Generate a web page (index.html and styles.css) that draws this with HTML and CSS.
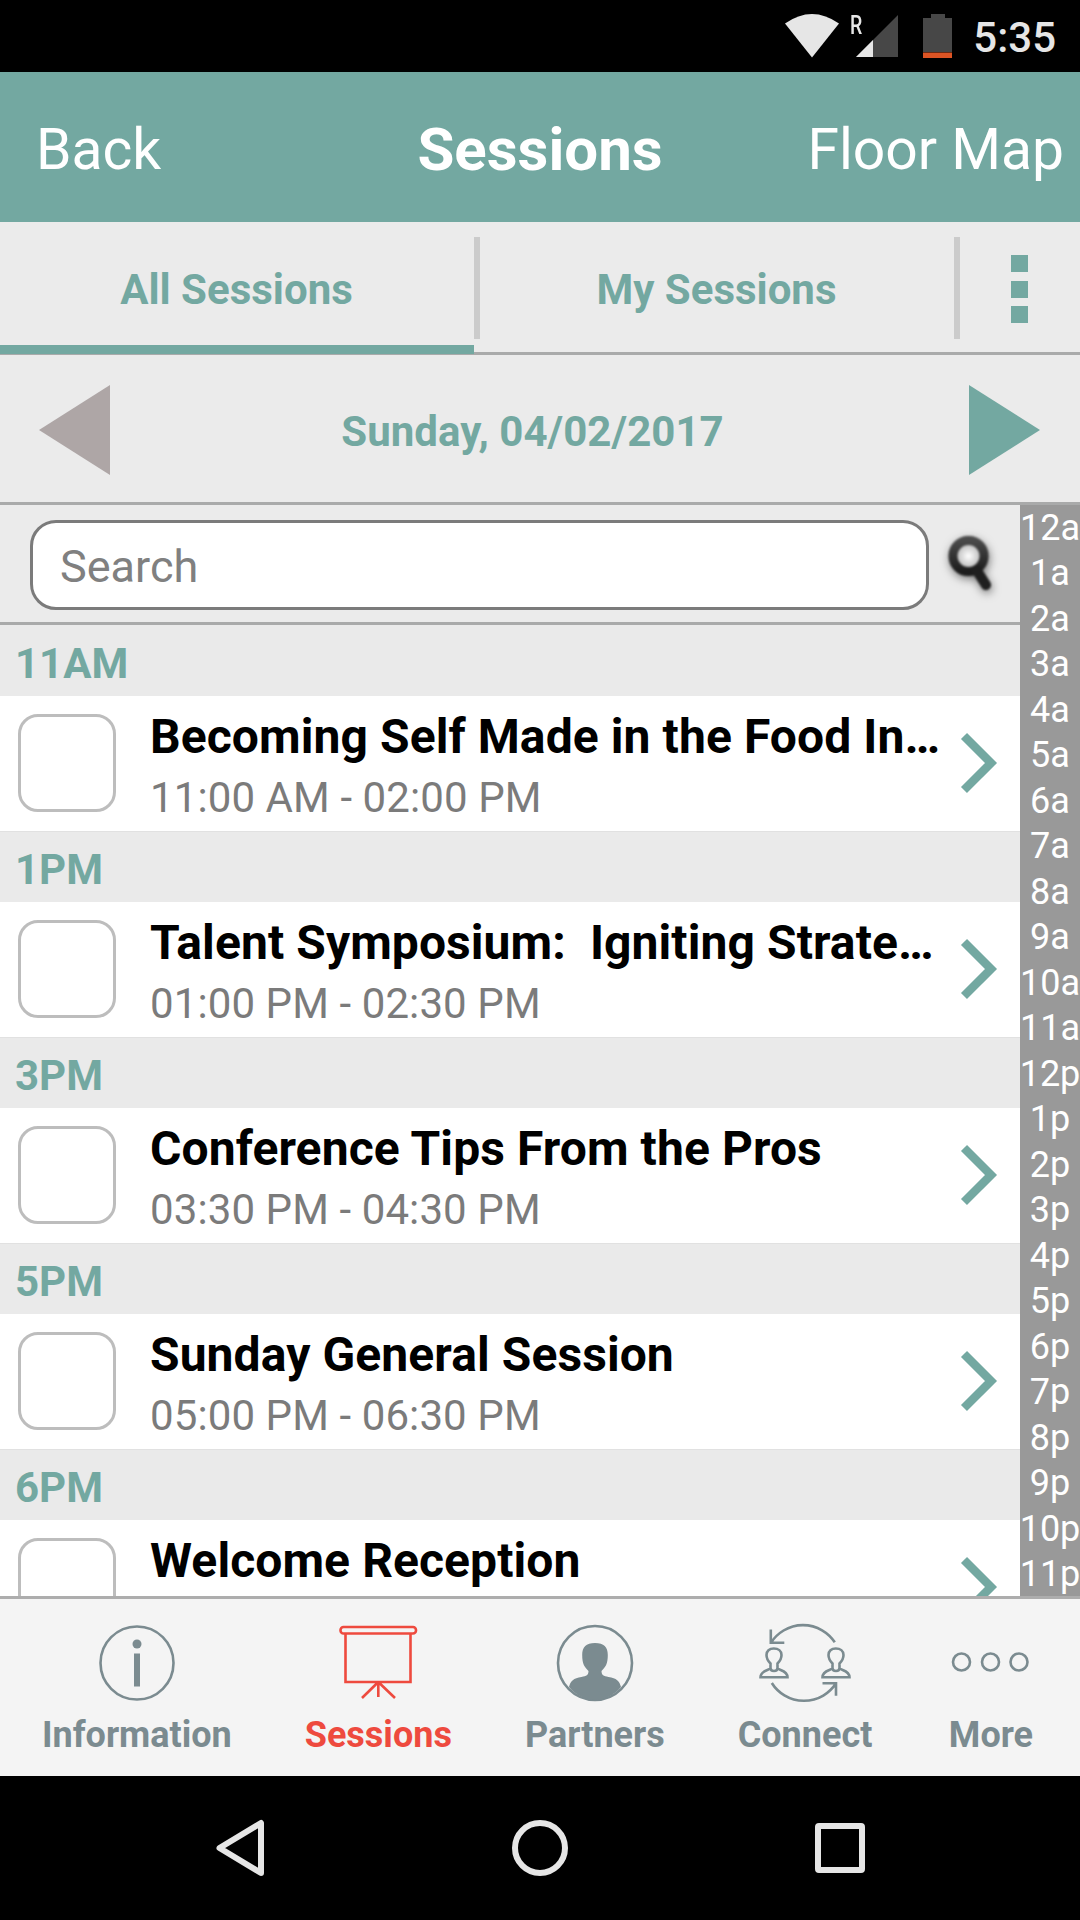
FILE: index.html
```html
<!DOCTYPE html>
<html lang="en">
<head>
  <meta charset="UTF-8">
  <meta name="viewport" content="width=device-width, initial-scale=1.0">
  <title>Sessions</title>
  <link rel="stylesheet" href="styles.css">
</head>
<body>
  <div class="status-bar">
    <svg class="wifi" width="54" height="44" viewBox="0 0 54 44"><path d="M0 9.500Q27-9.500 54 9.500L27 43.500z" fill="#e6e6e6"/></svg>
    <span class="roaming">R</span>
    <svg class="signal" width="44" height="44" viewBox="0 0 44 44">
      <path d="M43 1v42H1z" fill="#474747"/>
      <path d="M18 26v17H1z" fill="#e6e6e6"/>
    </svg>
    <svg class="battery" width="30" height="44" viewBox="0 0 30 44">
      <path d="M8 0h14v4h7v34H0V4h8z" fill="#474747"/>
      <path d="M0 38.500h29v5.500H0z" fill="#dc5424"/>
    </svg>
    <span class="clock">5:35</span>
  </div>

  <header class="header">
    <a class="header-link">Back</a>
    <h1>Sessions</h1>
    <a class="header-link right">Floor Map</a>
  </header>

  <nav class="tabs">
    <div class="tab active">All Sessions</div>
    <div class="divider"></div>
    <div class="tab">My Sessions</div>
    <div class="divider"></div>
    <div class="menu"><i></i><i></i><i></i></div>
  </nav>

  <div class="date-bar">
    <svg width="71" height="90" viewBox="0 0 71 90"><path d="M71 0v90L0 45z" fill="#aea6a6"/></svg>
    <span class="date">Sunday, 04/02/2017</span>
    <svg width="71" height="90" viewBox="0 0 71 90"><path d="M0 0v90l71-45z" fill="#73a8a1"/></svg>
  </div>

  <main class="content">
    <div class="list">
      <div class="search">
        <input class="search-input" type="text" placeholder="Search">
        <svg class="search-icon" width="60" height="66" viewBox="0 0 60 66">
          <defs>
            <radialGradient id="glass"><stop offset="0" stop-color="#fff"/><stop offset="1" stop-color="#aaa"/></radialGradient>
            <linearGradient id="ring" x1="0" y1="0" x2="0" y2="1"><stop offset="0" stop-color="#4a4a4a"/><stop offset="1" stop-color="#1c1c1c"/></linearGradient>
          </defs>
          <circle cx="27.500" cy="28" r="15.500" fill="url(#glass)" stroke="url(#ring)" stroke-width="9"/>
          <path d="M35.500 42l9.500 15" stroke="#1f1f1f" stroke-width="10" stroke-linecap="round"/>
        </svg>
      </div>

      <h2 class="hour">11AM</h2>
      <div class="session">
        <span class="checkbox"></span>
        <div class="info">
          <div class="title">Becoming Self Made in the Food In…</div>
          <div class="time">11:00 AM - 02:00 PM</div>
        </div>
        <svg class="chevron" width="38" height="62" viewBox="0 0 38 62"><path d="M4 4l27 27L4 58" fill="none" stroke="#73a8a1" stroke-width="8.500"/></svg>
      </div>

      <h2 class="hour">1PM</h2>
      <div class="session">
        <span class="checkbox"></span>
        <div class="info">
          <div class="title">Talent Symposium:  Igniting Strate…</div>
          <div class="time">01:00 PM - 02:30 PM</div>
        </div>
        <svg class="chevron" width="38" height="62" viewBox="0 0 38 62"><path d="M4 4l27 27L4 58" fill="none" stroke="#73a8a1" stroke-width="8.500"/></svg>
      </div>

      <h2 class="hour">3PM</h2>
      <div class="session">
        <span class="checkbox"></span>
        <div class="info">
          <div class="title">Conference Tips From the Pros</div>
          <div class="time">03:30 PM - 04:30 PM</div>
        </div>
        <svg class="chevron" width="38" height="62" viewBox="0 0 38 62"><path d="M4 4l27 27L4 58" fill="none" stroke="#73a8a1" stroke-width="8.500"/></svg>
      </div>

      <h2 class="hour">5PM</h2>
      <div class="session">
        <span class="checkbox"></span>
        <div class="info">
          <div class="title">Sunday General Session</div>
          <div class="time">05:00 PM - 06:30 PM</div>
        </div>
        <svg class="chevron" width="38" height="62" viewBox="0 0 38 62"><path d="M4 4l27 27L4 58" fill="none" stroke="#73a8a1" stroke-width="8.500"/></svg>
      </div>

      <h2 class="hour">6PM</h2>
      <div class="session">
        <span class="checkbox"></span>
        <div class="info">
          <div class="title">Welcome Reception</div>
        </div>
        <svg class="chevron" width="38" height="62" viewBox="0 0 38 62"><path d="M4 4l27 27L4 58" fill="none" stroke="#73a8a1" stroke-width="8.500"/></svg>
      </div>
    </div>

    <div class="hour-index">
      <span>12a</span>
      <span>1a</span>
      <span>2a</span>
      <span>3a</span>
      <span>4a</span>
      <span>5a</span>
      <span>6a</span>
      <span>7a</span>
      <span>8a</span>
      <span>9a</span>
      <span>10a</span>
      <span>11a</span>
      <span>12p</span>
      <span>1p</span>
      <span>2p</span>
      <span>3p</span>
      <span>4p</span>
      <span>5p</span>
      <span>6p</span>
      <span>7p</span>
      <span>8p</span>
      <span>9p</span>
      <span>10p</span>
      <span>11p</span>
    </div>
  </main>

  <footer class="tab-bar">
    <div class="tab-item">
      <svg width="80" height="80" viewBox="0 0 80 80">
        <circle cx="40" cy="40" r="36.500" fill="none" stroke="#7b8b90" stroke-width="2.600"/>
        <circle cx="40" cy="21" r="4.500" fill="#7b8b90"/>
        <path d="M37 30.500h6v33h-6z" fill="#7b8b90"/>
      </svg>
      <span>Information</span>
    </div>
    <div class="tab-item selected">
      <svg width="80" height="80" viewBox="0 0 80 80" fill="none" stroke="#ee4a3e" stroke-width="2.600">
        <rect x="2.500" y="4" width="75.500" height="6.500" rx="3"/>
        <path d="M7.500 11v48h65V11M40.300 59L24 75M40.300 59L57 75M40.300 59v15"/>
      </svg>
      <span>Sessions</span>
    </div>
    <div class="tab-item">
      <svg width="80" height="80" viewBox="0 0 80 80">
        <circle cx="40" cy="40" r="37" fill="none" stroke="#7b8b90" stroke-width="2.600"/>
        <path d="M40 20c-9 0-12.800 4-12.800 12 0 9 2.300 12 6.300 16 0 4-2 5-7 6-8 1-11 4-12.500 10 14 17 38 17 52 0-1.500-6-4.500-9-12.500-10-5-1-7-2-7-6 4-4 6.300-7 6.300-16 0-8-3.800-12-12.800-12z" fill="#7b8b90"/>
      </svg>
      <span>Partners</span>
    </div>
    <div class="tab-item">
      <svg width="92" height="80" viewBox="0 0 92 80" fill="none" stroke="#7b8b90" stroke-width="2.600">
        <path d="M75.800 19.300A38 38 0 0 0 12 19.700M11.800 6.500v13.200h13.500M12.800 60A38 38 0 0 0 77 60.300M63.500 60.300H77v12.500"/>
        <path id="person" d="M14.800 25.500c-4.500 0-7.300 2.500-7.300 6.500 0 3.500 2 6.500 4 8.500v4.500c-.5 2.500-10 2-10 9.300h27c0-7.300-9.500-6.800-10-9.300v-4.500c2-2 4-5 4-8.500 0-4-3.200-6.500-7.700-6.500zM11.500 45c0 4 7 4 7 0"/>
        <use href="#person" x="62"/>
      </svg>
      <span>Connect</span>
    </div>
    <div class="tab-item">
      <svg width="80" height="80" viewBox="0 0 80 80" fill="none" stroke="#7b8b90" stroke-width="2.600">
        <circle cx="10.500" cy="39" r="8.500"/>
        <circle cx="39.500" cy="39" r="8.500"/>
        <circle cx="68" cy="39" r="8.500"/>
      </svg>
      <span>More</span>
    </div>
  </footer>

  <div class="system-nav">
    <svg width="60" height="60" viewBox="0 0 60 60"><path d="M51 5v50L9.500 30z"/></svg>
    <svg width="60" height="60" viewBox="0 0 60 60"><circle cx="30" cy="30" r="25"/></svg>
    <svg width="60" height="60" viewBox="0 0 60 60"><rect x="8" y="8" width="44" height="44" rx="1"/></svg>
  </div>
</body>
</html>
```
FILE: styles.css
```css
* {
  box-sizing: border-box;
}

body {
  margin: 0;
  width: 1080px;
  height: 1920px;
  display: flex;
  flex-direction: column;
  overflow: hidden;
  font-family: Roboto, "Liberation Sans", sans-serif;
  background: #ebebeb;
}

svg {
  display: block;
  flex: none;
}

h1,
h2 {
  margin: 0;
}

.status-bar {
  height: 72px;
  background: #000;
  display: flex;
  justify-content: flex-end;
  align-items: flex-start;
  padding: 14px 24px 0 0;
  color: #e6e6e6;
}

.roaming {
  width: 12px;
  margin-left: 11px;
  font-size: 26px;
  line-height: 22px;
  font-weight: 500;
  transform: scaleX(0.75);
  transform-origin: left;
}

.signal {
  margin-left: -7px;
}

.battery {
  margin-left: 24px;
}

.clock {
  margin-left: 20px;
  font-size: 42px;
  line-height: 47px;
  font-weight: 500;
}

.header {
  height: 150px;
  background: #73a8a1;
  color: #fff;
  display: grid;
  grid-template-columns: 310px 1fr 310px;
  align-items: center;
  padding: 4px 16px 0 16px;
}

.header h1 {
  font-size: 60px;
  font-weight: 700;
  text-align: center;
}

.header-link {
  padding-left: 20px;
  font-size: 57px;
}

.header-link.right {
  padding-left: 0;
  text-align: right;
}

.tabs {
  height: 133px;
  border-bottom: 3px solid #a9aaaa;
  display: flex;
}

.tab {
  width: 474px;
  height: 132px;
  padding: 43px 1px 0 0;
  text-align: center;
  font-size: 42px;
  line-height: 49px;
  font-weight: 700;
  color: #73a8a1;
}

.tab.active {
  border-bottom: 9px solid #73a8a1;
}

.divider {
  width: 6px;
  height: 102px;
  margin-top: 15px;
  background: #cbcbcb;
}

.menu {
  flex: 1;
  display: flex;
  flex-direction: column;
  align-items: center;
  gap: 8.5px;
  padding: 33px 2px 0 0;
}

.menu i {
  width: 17px;
  height: 17px;
  background: #73a8a1;
}

.date-bar {
  height: 150px;
  border-bottom: 3px solid #a9aaaa;
  display: flex;
  justify-content: space-between;
  align-items: center;
  padding: 2px 40px 0 39px;
}

.date {
  padding: 3px 14px 0 0;
  font-size: 42px;
  font-weight: 700;
  color: #73a8a1;
  letter-spacing: 0.05px;
}

.content {
  height: 1091px;
  display: flex;
  overflow: hidden;
}

.list {
  width: 1020px;
}

.search {
  height: 120px;
  border-bottom: 3px solid #a9aaaa;
  display: flex;
  padding: 15px 0 0 30px;
}

.search-input {
  width: 899px;
  height: 90px;
  border: 3px solid #7b7b7b;
  border-radius: 26px;
  background: #fff;
  padding: 2px 27px 0;
  font-family: inherit;
  font-size: 45px;
}

.search-input::placeholder {
  color: #808080;
}

.search-icon {
  margin: 8px 0 0 12px;
  filter: blur(0.8px) drop-shadow(1px 3px 4px rgba(0, 0, 0, 0.5));
}

.hour {
  height: 71px;
  padding: 14px 15px 0;
  font-size: 42px;
  line-height: 49px;
  font-weight: 700;
  color: #73a8a1;
  background: #eaeaea;
}

.session {
  height: 135px;
  background: #fff;
  display: flex;
}

/* thin edge where a session meets the next hour */
.session + .hour {
  box-shadow: inset 0 1px #e1e1e1;
}

.checkbox {
  width: 98px;
  height: 98px;
  margin: 18px 0 0 18px;
  border: 3px solid #bdbdbd;
  border-radius: 20px;
}

.info {
  width: 810px;
  margin-left: 34px;
  padding-top: 13px;
}

.title {
  font-size: 48px;
  line-height: 56px;
  font-weight: 700;
  letter-spacing: 0.09px;
  color: #000;
  white-space: pre;
}

.time {
  margin-top: 8px;
  font-size: 42px;
  line-height: 49px;
  letter-spacing: 0.1px;
  color: #7b7b7b;
}

.chevron {
  margin-top: 36px;
}

.hour-index {
  width: 60px;
  background: #999;
  color: #fff;
  display: flex;
  flex-direction: column;
}

.hour-index span {
  flex: 0 0 45.5px;
  display: flex;
  align-items: center;
  justify-content: center;
  font-size: 36px;
  line-height: 42px;
}

.tab-bar {
  height: 180px;
  border-top: 3px solid #adadad;
  background: #f4f4f4;
  display: flex;
  gap: 73px;
  padding: 24px 47px 0 42px;
}

.tab-item {
  display: flex;
  flex-direction: column;
  align-items: center;
  color: #7b8b90;
  font-size: 36px;
  line-height: 42px;
  font-weight: 700;
}

.tab-item:last-child {
  margin-left: auto;
}

.tab-item span {
  margin-top: 11px;
}

.tab-item.selected {
  color: #ee4a3e;
}

.system-nav {
  height: 144px;
  background: #000;
  display: flex;
  justify-content: space-between;
  align-items: center;
  padding: 0 210px;
}

.system-nav svg {
  fill: none;
  stroke: #e6e6e6;
  stroke-width: 6;
  stroke-linejoin: round;
}
```
